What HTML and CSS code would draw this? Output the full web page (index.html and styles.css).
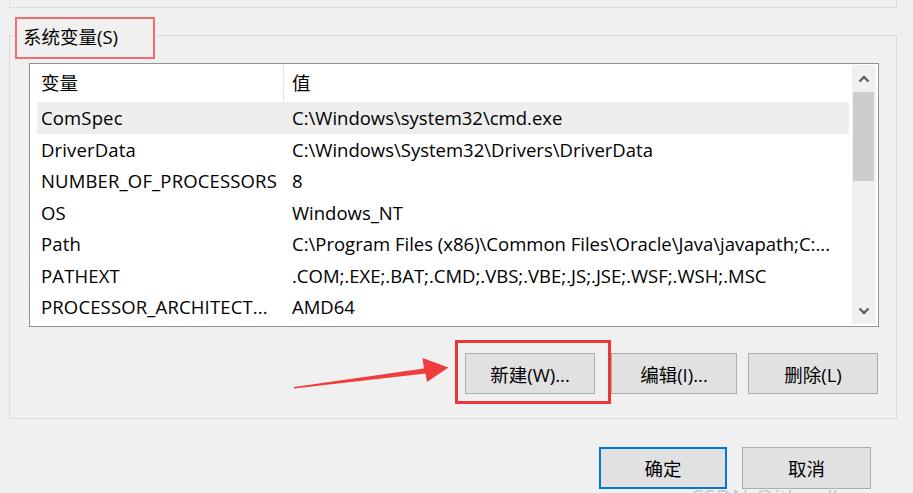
FILE: index.html
```html
<!DOCTYPE html>
<html lang="zh-CN">
<head>
<meta charset="utf-8">
<title>系统变量</title>
<link rel="stylesheet" href="styles.css">
</head>
<body>
  <div class="prev-group"></div>

  <div class="group">
    <div class="group-label">系统变量(S)</div>

    <div class="list">
      <div class="list-body">
        <div class="list-head">
          <div class="c1">变量</div>
          <div class="c2">值</div>
        </div>
        <div class="row sel"><div class="c1">ComSpec</div><div class="c2">C:\Windows\system32\cmd.exe</div></div>
        <div class="row"><div class="c1">DriverData</div><div class="c2">C:\Windows\System32\Drivers\DriverData</div></div>
        <div class="row"><div class="c1">NUMBER_OF_PROCESSORS</div><div class="c2">8</div></div>
        <div class="row"><div class="c1">OS</div><div class="c2">Windows_NT</div></div>
        <div class="row"><div class="c1">Path</div><div class="c2">C:\Program Files (x86)\Common Files\Oracle\Java\javapath;C:...</div></div>
        <div class="row"><div class="c1">PATHEXT</div><div class="c2">.COM;.EXE;.BAT;.CMD;.VBS;.VBE;.JS;.JSE;.WSF;.WSH;.MSC</div></div>
        <div class="row"><div class="c1">PROCESSOR_ARCHITECT...</div><div class="c2">AMD64</div></div>
      </div>
      <div class="scrollbar">
        <div class="sb-btn">
          <svg width="12" height="8" viewBox="0 0 12 8"><path d="M1.5 6.5 L6 2 L10.5 6.5" fill="none" stroke="#606060" stroke-width="2.4"/></svg>
        </div>
        <div class="sb-thumb"></div>
        <div class="sb-track"></div>
        <div class="sb-btn">
          <svg width="12" height="8" viewBox="0 0 12 8"><path d="M1.5 1.5 L6 6 L10.5 1.5" fill="none" stroke="#606060" stroke-width="2.4"/></svg>
        </div>
      </div>
    </div>

    <div class="actions">
      <div class="btn-wrap">
        <svg class="arrow" width="165" height="40" viewBox="0 0 165 40">
          <polygon points="4,35 134,16.5 132.5,6 158.5,15.5 137,30 135.5,21.5 4,36.5" fill="#f03c3c"/>
        </svg>
        <button class="btn btn-new">新建(W)...</button>
        <span class="highlight"></span>
      </div>
      <button class="btn btn-edit">编辑(I)...</button>
      <button class="btn btn-del">删除(L)</button>
    </div>
  </div>

  <div class="dialog-actions">
    <button class="btn btn-ok">确定</button>
    <button class="btn btn-cancel">取消</button>
  </div>

  <div class="watermark">CSDN @itle_all_you</div>
</body>
</html>
```

FILE: styles.css
```css
html, body {
  margin: 0;
  height: 493px;
  overflow: hidden;
}

body {
  position: relative;
  background: #f0f0f0;
  color: #000;
  font-family: "Open Sans", "Noto Sans CJK SC", sans-serif;
  font-size: 18.5px;
}

.prev-group {
  height: 7px;
  margin: 0 16px 0 9px;
  border: 1px solid #dcdcdc;
  border-top: none;
}

.group {
  margin: 27px 16px 0 9px;
  border: 1px solid #dcdcdc;
  padding: 0 0 24px 0;
}

.group-label {
  margin: -19px 0 0 5px;
  width: 140px;
  height: 42px;
  box-sizing: border-box;
  border: 2px solid #f26e6e;
  background: #f0f0f0;
  padding-left: 6px;
  line-height: 36px;
  white-space: nowrap;
}

.list {
  margin: 4px 0 0 19px;
  width: 850px;
  height: 264px;
  box-sizing: border-box;
  border: 1px solid #8f9297;
  background: #fff;
  display: flex;
}

.list-body {
  width: 819px;
  flex: none;
  overflow: hidden;
}

.list-head {
  display: grid;
  grid-template-columns: 254px 1fr;
  height: 38px;
  line-height: 38px;
}

.list-head .c1 {
  box-sizing: border-box;
  padding-left: 11px;
  border-right: 1px solid #e5e5e5;
}

.list-head .c2 {
  padding-left: 8px;
}

.row {
  display: grid;
  grid-template-columns: 246px 1fr;
  height: 31.5px;
  line-height: 31.5px;
  margin-left: 7px;
  white-space: nowrap;
}

.row .c1 {
  padding-left: 4px;
  overflow: hidden;
  letter-spacing: 0.15px;
}

.row .c2 {
  padding-left: 9px;
  overflow: hidden;
}

.row.sel {
  background: #eeeeee;
}

.scrollbar {
  margin: 1px 2px 2px 3px;
  width: 24px;
  flex: none;
  background: #f0f0f0;
  display: flex;
  flex-direction: column;
}

.sb-btn {
  height: 27px;
  display: flex;
  align-items: center;
  justify-content: center;
}

.sb-thumb {
  height: 89px;
  margin: 0 2px 0 1px;
  background: #cdcdcd;
}

.sb-track {
  flex: 1;
}

.actions {
  display: flex;
  justify-content: flex-end;
  margin-top: 26px;
  padding-right: 18px;
}

.btn {
  height: 41px;
  box-sizing: border-box;
  border: 1px solid #adadad;
  background: #e1e1e1;
  padding: 0;
  margin: 0;
  font: inherit;
  color: #000;
  display: flex;
  align-items: center;
  justify-content: center;
}

.btn-wrap {
  position: relative;
  margin-right: 16px;
}

.btn-new {
  width: 130px;
}

.btn-edit {
  width: 126px;
  margin-right: 11px;
}

.btn-del {
  width: 130px;
}

.highlight {
  position: absolute;
  top: -13px;
  left: -10px;
  right: -16px;
  bottom: -10px;
  border: 3px solid #ee3535;
}

.arrow {
  position: absolute;
  left: -175px;
  top: -1px;
}

.dialog-actions {
  display: flex;
  justify-content: flex-end;
  gap: 15px;
  margin: 28px 42px 0 0;
}

.dialog-actions .btn {
  height: 42px;
}

.btn-ok {
  width: 128px;
  border: 2px solid #0078d7;
}

.btn-cancel {
  width: 129px;
}

.watermark {
  position: absolute;
  left: 690px;
  top: 486px;
  font-size: 22px;
  line-height: 1;
  color: #c9c9c9;
  white-space: nowrap;
}
```
